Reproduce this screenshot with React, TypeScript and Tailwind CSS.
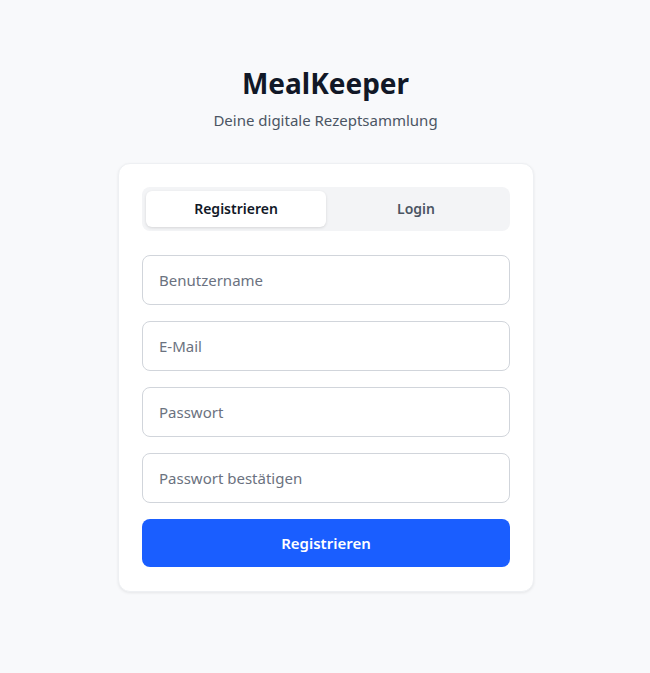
import { useState } from 'react';

export default function App() {
  const [tab, setTab] = useState<'register' | 'login'>('register');

  return (
    <div
      className="min-h-screen bg-[#f8f9fb] flex flex-col items-center pt-[67px]"
      style={{ fontFamily: '"Noto Sans", "Open Sans", sans-serif' }}
    >
      <h1 className="ml-[1px] text-[28px] leading-8 font-bold text-[#111827]">MealKeeper</h1>
      <p className="ml-[1px] mt-[10px] text-[15px] leading-[22px] text-[#4b5563]">Deine digitale Rezeptsammlung</p>

      <div className="ml-[2px] mt-8 w-[416px] bg-white rounded-xl shadow-[0_1px_3px_rgba(0,0,0,0.08)] border border-[#eef0f3] p-[23px] pb-6">
        {/* Tabs */}
        <div className="flex bg-[#f3f4f6] rounded-lg p-1">
          <button
            onClick={() => setTab('register')}
            className={`flex-1 h-9 rounded-md text-sm font-semibold ${
              tab === 'register' ? 'bg-white text-[#111827] shadow-[0_1px_3px_rgba(0,0,0,0.12)]' : 'text-[#4b5563]'
            }`}
          >
            Registrieren
          </button>
          <button
            onClick={() => setTab('login')}
            className={`flex-1 h-9 rounded-md text-sm font-semibold ${
              tab === 'login' ? 'bg-white text-[#111827] shadow-[0_1px_3px_rgba(0,0,0,0.12)]' : 'text-[#4b5563]'
            }`}
          >
            Login
          </button>
        </div>

        <form className="mt-6 flex flex-col gap-4" onSubmit={(e) => e.preventDefault()}>
          <input
            type="text"
            placeholder="Benutzername"
            className="h-[50px] w-full rounded-lg border border-[#d1d5db] px-4 text-[15px] text-[#111827] placeholder:text-[#6b7280] outline-none"
          />
          <input
            type="email"
            placeholder="E-Mail"
            className="h-[50px] w-full rounded-lg border border-[#d1d5db] px-4 text-[15px] text-[#111827] placeholder:text-[#6b7280] outline-none"
          />
          <input
            type="password"
            placeholder="Passwort"
            className="h-[50px] w-full rounded-lg border border-[#d1d5db] px-4 text-[15px] text-[#111827] placeholder:text-[#6b7280] outline-none"
          />
          <input
            type="password"
            placeholder="Passwort bestätigen"
            className="h-[50px] w-full rounded-lg border border-[#d1d5db] px-4 text-[15px] text-[#111827] placeholder:text-[#6b7280] outline-none"
          />
          <button
            type="submit"
            className="h-12 w-full rounded-lg bg-[#1a5eff] text-white text-[15px] font-semibold"
          >
            Registrieren
          </button>
        </form>
      </div>
    </div>
  );
}
